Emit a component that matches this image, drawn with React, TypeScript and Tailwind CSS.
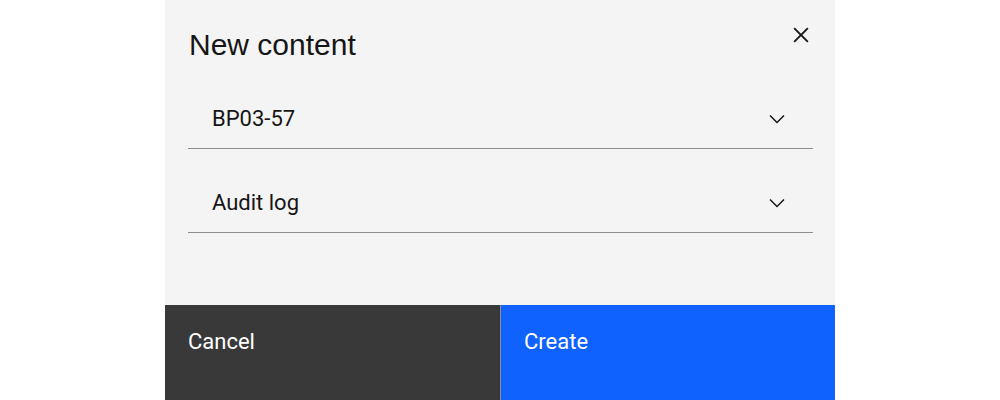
import React from "react";

function Chevron() {
  return (
    <svg width="24" height="24" viewBox="0 0 16 16" fill="#161616" aria-hidden="true">
      <path d="M8 11L3 6 3.7 5.3 8 9.6 12.3 5.3 13 6z" />
    </svg>
  );
}

function Field({ label }: { label: string }) {
  return (
    <div className="flex h-[60px] items-center justify-between border-b border-[#8d8d8d] pl-[24px] pr-[24px]">
      <span className="text-[22px] leading-[26px] text-[#161616]" style={{ fontFamily: "Roboto, 'Noto Sans', sans-serif" }}>
        {label}
      </span>
      <Chevron />
    </div>
  );
}

export default function App() {
  return (
    <div className="flex min-h-[400px] w-full justify-center bg-white">
      <div className="relative flex w-[670px] flex-col bg-[#f4f4f4]">
        <h1
          className="pl-[24px] pt-[27px] text-[30px] font-normal leading-[36px] text-[#161616]"
          style={{ fontFamily: "'Liberation Sans', Arial, sans-serif" }}
        >
          New content
        </h1>
        <button className="absolute left-[621px] top-[20px] flex h-[30px] w-[30px] items-center justify-center">
          <svg width="30" height="30" viewBox="0 0 32 32" fill="#161616" aria-hidden="true">
            <polygon points="24 9.4 22.6 8 16 14.6 9.4 8 8 9.4 14.6 16 8 22.6 9.4 24 16 17.4 22.6 24 24 22.6 17.4 16 24 9.4" />
          </svg>
        </button>
        <div className="mt-[26px] flex flex-col gap-[24px] pl-[23px] pr-[22px] pb-[72px]">
          <Field label="BP03-57" />
          <Field label="Audit log" />
        </div>
        <div className="flex h-[96px]" style={{ fontFamily: "Roboto, 'Noto Sans', sans-serif" }}>
          <div className="w-[335px] bg-[#393939] pl-[23px] pt-[24px] text-[22px] leading-[26px] text-white">Cancel</div>
          <div className="w-[1px] bg-[#8d8d8d]" />
          <div className="flex-1 bg-[#0f62fe] pl-[23px] pt-[24px] text-[22px] leading-[26px] text-white">Create</div>
        </div>
      </div>
    </div>
  );
}
